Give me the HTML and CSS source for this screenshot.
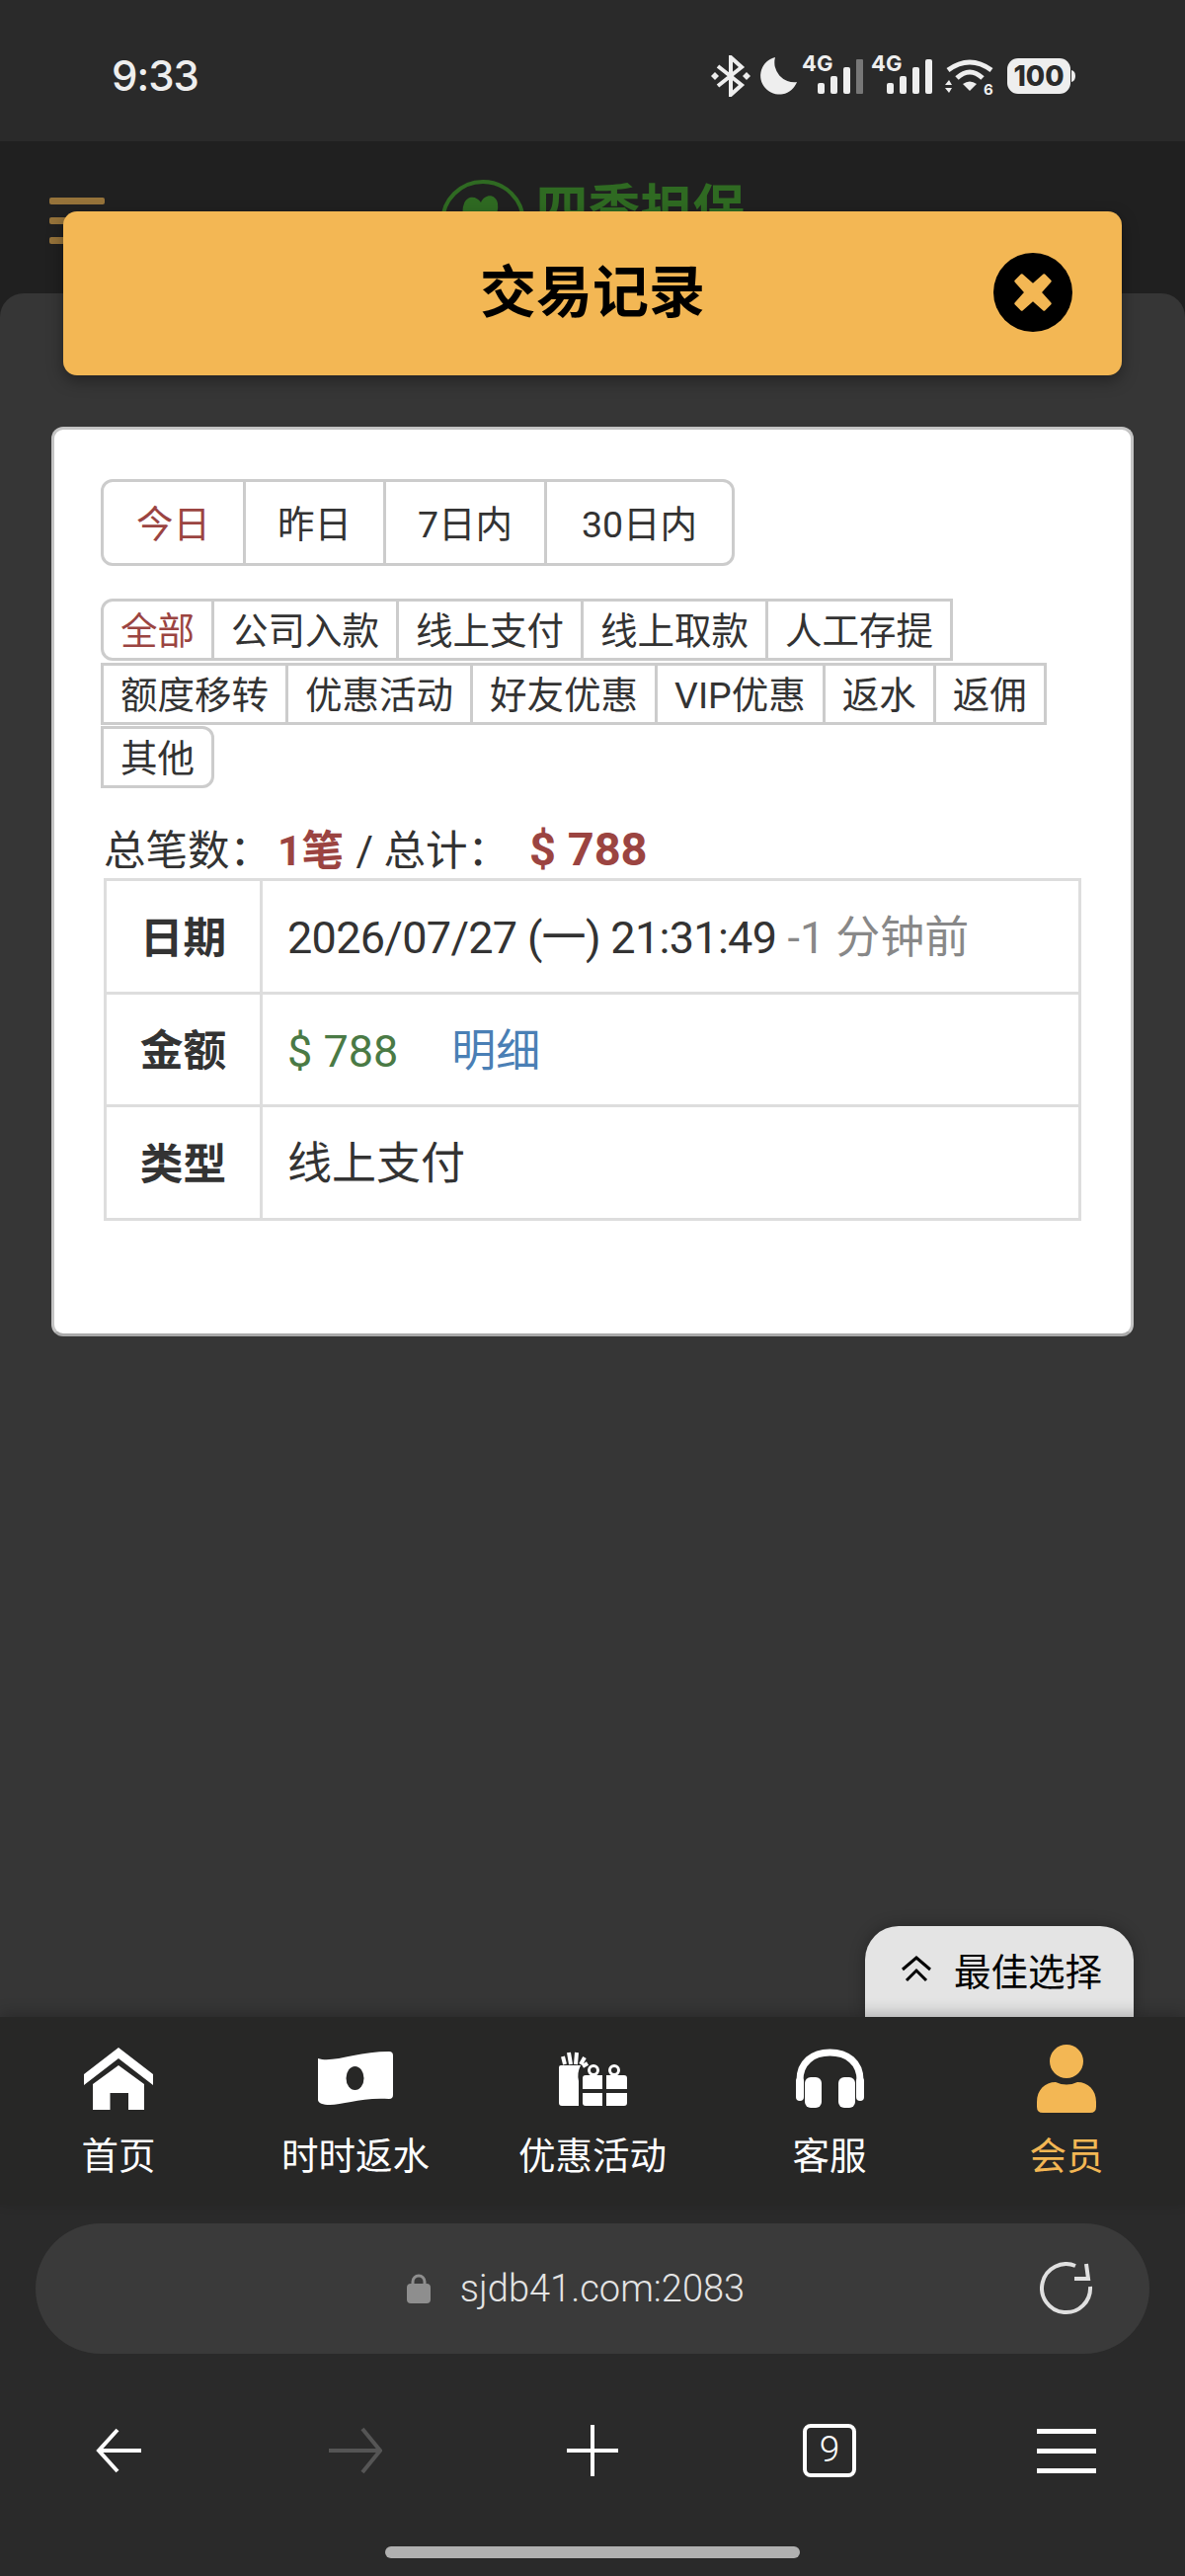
FILE: index.html
```html
<!DOCTYPE html>
<html lang="zh-CN">
<head>
  <meta charset="UTF-8" />
  <meta name="viewport" content="width=device-width, initial-scale=1.0"/>
  <title>交易记录</title>
  <link rel="stylesheet" href="styles.css">
</head>
<body>

  <!-- Phone status bar -->
  <div class="status-bar">
    <span class="clock">9:33</span>
    <div class="status-icons">
      <svg width="40" height="42" viewBox="0 0 40 42">
        <path d="M7 11 L31 30 L20 40 V2 L31 12 L7 31" fill="none" stroke="#eee" stroke-width="4"/>
        <path d="M4 17 L8 21 L4 25 L0 21Z M36 17 L40 21 L36 25 L32 21Z" fill="#eee"/>
      </svg>
      <svg class="ic-moon" width="37" height="38" viewBox="0 0 37 38">
        <path d="M15 0 A19 19 0 1 0 37 25 A20 20 0 0 1 15 0Z" fill="#eee"/>
      </svg>
      <svg class="ic-signal first" width="63" height="50" viewBox="0 -10 63 50">
        <text x="0" y="16" class="sig-text">4G</text>
        <rect x="16" y="28" width="7" height="11" rx="2" fill="#eee"/>
        <rect x="29" y="21" width="7" height="18" rx="2" fill="#eee"/>
        <rect x="42" y="12" width="7" height="27" rx="2" fill="#eee"/>
        <rect x="55" y="4" width="7" height="35" rx="1" fill="#777"/>
      </svg>
      <svg class="ic-signal second" width="63" height="50" viewBox="0 -10 63 50">
        <text x="0" y="16" class="sig-text">4G</text>
        <rect x="16" y="28" width="7" height="11" rx="2" fill="#eee"/>
        <rect x="29" y="21" width="7" height="18" rx="2" fill="#eee"/>
        <rect x="42" y="12" width="7" height="27" rx="2" fill="#eee"/>
        <rect x="55" y="4" width="7" height="35" rx="2" fill="#eee"/>
      </svg>
      <svg class="ic-wifi" width="50" height="46" viewBox="0 0 50 46">
        <path d="M3 12 Q25 -4 47 12" fill="none" stroke="#eee" stroke-width="5"/>
        <path d="M12 20 Q25 8 38 20" fill="none" stroke="#eee" stroke-width="5"/>
        <path d="M18 26 Q25 21 32 26 L25 33Z" fill="#eee"/>
        <path d="M4 22 L7 27 H0Z M0 30 H7 L4 35Z" fill="#eee"/>
        <text x="39" y="37" class="wifi-six">6</text>
      </svg>
      <svg class="ic-battery" width="69" height="36" viewBox="0 0 69 36">
        <rect x="0" y="0" width="64" height="36" rx="11" fill="#eee"/>
        <path d="M65 12 Q69 13 69 18 Q69 23 65 24Z" fill="#eee"/>
        <text x="32" y="28" text-anchor="middle" class="batt-text">100</text>
      </svg>
    </div>
  </div>

  <!-- Site header, mostly behind the modal -->
  <div class="site-header">
    <div class="burger"><i></i><i></i><i></i></div>
    <div class="logo">
      <svg width="86" height="86" viewBox="0 0 86 86">
        <circle cx="43" cy="43" r="41" fill="none" stroke="#2f6a22" stroke-width="4"/>
        <path d="M40 58 C24 44 20 34 24 24 C28 15 37 17 41 23 C45 14 56 14 58 24 C60 36 50 48 40 58Z" fill="#2f6a22"/>
      </svg>
      <span class="logo-text">四季担保</span>
    </div>
  </div>

  <div class="overlay">
    <div class="modal-head">
      <h1>交易记录</h1>
      <button class="close-btn" type="button">
        <svg width="50" height="50" viewBox="0 0 40 40">
          <path d="M6 11 L11 6 L20 14 L29 6 L34 11 L26 20 L34 29 L29 34 L20 26 L11 34 L6 29 L14 20Z" fill="#f3b754" stroke="#f3b754" stroke-width="2" stroke-linejoin="round"/>
        </svg>
      </button>
    </div>

    <div class="card">
      <div class="date-tabs">
        <a class="date-tab active">今日</a>
        <a class="date-tab">昨日</a>
        <a class="date-tab">7日内</a>
        <a class="date-tab">30日内</a>
      </div>

      <div class="types">
        <a class="type active">全部</a>
        <a class="type">公司入款</a>
        <a class="type">线上支付</a>
        <a class="type">线上取款</a>
        <a class="type">人工存提</a>
        <a class="type">额度移转</a>
        <a class="type">优惠活动</a>
        <a class="type">好友优惠</a>
        <a class="type">VIP优惠</a>
        <a class="type">返水</a>
        <a class="type">返佣</a>
        <a class="type">其他</a>
      </div>

      <div class="summary">总笔数：<b class="sum-count">1笔</b> / 总计：<b class="sum-total">$ 788</b></div>

      <table class="records">
        <tr>
          <th>日期</th>
          <td><span class="stamp">2026/07/27 (一) 21:31:49</span> <span class="ago">-1 分钟前</span></td>
        </tr>
        <tr>
          <th>金额</th>
          <td><span class="amount">$ 788</span><a class="detail">明细</a></td>
        </tr>
        <tr>
          <th>类型</th>
          <td>线上支付</td>
        </tr>
      </table>
    </div>

    <div class="best-pick">
      <svg width="32" height="27" viewBox="0 0 32 27">
        <path d="M2 14 L16 2 L30 14 M6 25 L16 15 L26 25" fill="none" stroke="#000" stroke-width="3"/>
      </svg>
      <span>最佳选择</span>
    </div>
  </div>

  <!-- Site bottom nav -->
  <nav class="bottom-nav">
    <a class="nav-item">
      <span class="nav-icon">
        <svg width="70" height="63" viewBox="0 0 70 63">
          <path d="M35 0 L70 27 V38 L35 11 L0 38 V27Z" fill="#fff"/>
          <path d="M35 18 L61 37 V63 H45 V46 H26.5 V63 H9 V37Z" fill="#fff"/>
        </svg>
      </span>
      首页
    </a>
    <a class="nav-item">
      <span class="nav-icon">
        <svg width="76" height="54" viewBox="0 0 76 54">
          <path d="M0 7 C15 12 40 0 72 0 Q76 0 76 4 V44 Q76 48 72 48 C45 46 25 54 12 54 C5 54 0 52 0 49Z" fill="#fff"/>
          <ellipse cx="37.5" cy="27" rx="9" ry="12" fill="#272726"/>
        </svg>
      </span>
      时时返水
    </a>
    <a class="nav-item">
      <span class="nav-icon">
        <svg width="69" height="55" viewBox="0 0 69 55">
          <path d="M2 14 H22 Q18 22 20 30 V55 H3 Q0 55 0 52 V16 Q0 14 2 14Z" fill="#fff"/>
          <path d="M6 13 L4 5 M12 13 L10 1 M17 13 L18 1 M22 13 L26 6 M24 15 L29 12" stroke="#fff" stroke-width="4" fill="none"/>
          <circle cx="35" cy="19" r="4.5" fill="none" stroke="#fff" stroke-width="3"/>
          <circle cx="56" cy="19" r="4.5" fill="none" stroke="#fff" stroke-width="3"/>
          <path d="M24 27 Q24 24 27 24 H44 V38 H24Z M48 24 H66 Q69 24 69 27 V38 H48Z" fill="#fff"/>
          <path d="M24 42 H44 V55 H27 Q24 55 24 52Z M48 42 H69 V52 Q69 55 66 55 H48Z" fill="#fff"/>
        </svg>
      </span>
      优惠活动
    </a>
    <a class="nav-item">
      <span class="nav-icon">
        <svg width="69" height="60" viewBox="0 0 69 60">
          <path d="M4 44 V32 C4 14 17 4 34.5 4 C52 4 65 14 65 32 V44" fill="none" stroke="#fff" stroke-width="7"/>
          <rect x="0" y="29" width="8" height="24" rx="4" fill="#fff"/>
          <rect x="61" y="29" width="8" height="24" rx="4" fill="#fff"/>
          <rect x="9" y="29" width="17" height="31" rx="6" fill="#fff"/>
          <rect x="43" y="29" width="17" height="31" rx="6" fill="#fff"/>
        </svg>
      </span>
      客服
    </a>
    <a class="nav-item current">
      <span class="nav-icon">
        <svg width="60" height="69" viewBox="0 0 60 69">
          <ellipse cx="30" cy="17" rx="17" ry="17" fill="#f3b754"/>
          <path d="M0 58 C0 46 8 38 19 38 Q30 43 41 38 C52 38 60 46 60 58 V63 Q60 69 54 69 H6 Q0 69 0 63Z" fill="#f3b754"/>
        </svg>
      </span>
      会员
    </a>
  </nav>

  <!-- Browser chrome -->
  <div class="browser">
    <div class="url-bar">
      <svg class="lock" width="24" height="30" viewBox="0 0 24 30">
        <path d="M6 12 V8 A6 6 0 0 1 18 8 V12" fill="none" stroke="#8e8e8e" stroke-width="3"/>
        <rect x="0" y="10" width="24" height="20" rx="4" fill="#8e8e8e"/>
      </svg>
      <span class="url">sjdb41.com:2083</span>
      <svg class="reload" width="54" height="54" viewBox="0 0 54 54">
        <path d="M51 25 A24.5 24.5 0 1 1 36 4" fill="none" stroke="#e0e0e0" stroke-width="4"/>
        <path d="M47 2 L49 17 H35" fill="none" stroke="#e0e0e0" stroke-width="4"/>
      </svg>
    </div>
    <div class="toolbar">
      <svg width="46" height="46" viewBox="0 0 46 46">
        <path d="M22 2 L3 23 L22 44 M3 23 H46" fill="none" stroke="#fff" stroke-width="4"/>
      </svg>
      <svg width="54" height="48" viewBox="0 0 54 48">
        <path d="M34 2 L52 24 L34 46 M0 24 H52" fill="none" stroke="#555" stroke-width="4"/>
      </svg>
      <svg width="52" height="52" viewBox="0 0 52 52">
        <path d="M26 0 V52 M0 26 H52" fill="none" stroke="#fff" stroke-width="4"/>
      </svg>
      <div class="tab-count">9</div>
      <div class="menu"><i></i><i></i><i></i></div>
    </div>
    <div class="home-bar"></div>
  </div>
</body>
</html>
```
FILE: styles.css
```css
* {
  box-sizing: border-box;
}

body {
  margin: 0;
  width: 1200px;
  height: 2608px;
  display: flex;
  flex-direction: column;
  overflow: hidden;
  background-color: #202020;
  color: #333;
  font-family: Roboto, 'Noto Sans CJK SC', sans-serif;
}

/* status bar */
.status-bar {
  height: 143px;
  flex: none;
  background-color: #2a2a2a;
  padding: 56px 111px 0 113px;
  display: flex;
  justify-content: space-between;
  align-items: flex-start;
}

.clock {
  font-family: Inter, sans-serif;
  font-size: 42px;
  font-weight: 500;
  letter-spacing: -1px;
  line-height: 42px;
  color: #eee;
}

.status-icons {
  display: flex;
  align-items: flex-start;
}

.ic-moon { margin: 2px 0 0 10px; }
.ic-signal { margin-top: -10px; }
.ic-signal.first { margin-left: 5px; }
.ic-signal.second { margin-left: 7px; }
.ic-wifi { margin: 3px 0 0 12px; }
.ic-battery { margin: 3px 0 0 13px; }

.sig-text {
  font-family: Inter, sans-serif;
  font-size: 22px;
  font-weight: 700;
  fill: #eee;
}

.wifi-six {
  font-family: Inter, sans-serif;
  font-size: 15px;
  font-weight: 700;
  fill: #eee;
}

.batt-text {
  font-family: Inter, sans-serif;
  font-size: 28px;
  font-weight: 800;
  fill: #2a2a2a;
}

/* site header */
.site-header {
  height: 154px;
  flex: none;
  background-color: #202020;
  display: grid;
  grid-template-columns: 1fr auto 1fr;
  align-items: start;
  padding-left: 50px;
}

.burger {
  margin-top: 57px;
  width: 56px;
  display: flex;
  flex-direction: column;
  gap: 13px;
}

.burger i {
  display: block;
  height: 7px;
  border-radius: 2px;
  background-color: #96733a;
}

.logo {
  margin-top: 39px;
  display: flex;
  gap: 11px;
  margin-left: -50px;
}

.logo-text {
  font-size: 53px;
  font-weight: 700;
  line-height: 62px;
  color: #2f6a22;
}

/* dim page */
.overlay {
  flex: 1;
  position: relative;
  display: flex;
  flex-direction: column;
  background-color: #363636;
  border-radius: 24px 24px 0 0;
  padding: 135px 52px 0;
}

.modal-head {
  position: absolute;
  left: 64px;
  top: -83px;
  width: 1072px;
  height: 166px;
  background-color: #f3b754;
  border-radius: 14px;
  box-shadow: 0 6px 16px rgba(0, 0, 0, 0.35);
  display: flex;
  align-items: center;
  justify-content: center;
}

.modal-head h1 {
  margin: 0 0 12px;
  font-size: 57px;
  font-weight: 700;
  color: #000;
}

.close-btn {
  position: absolute;
  right: 50px;
  top: 42px;
  width: 80px;
  height: 80px;
  padding: 0;
  border: none;
  border-radius: 50%;
  background-color: #000;
  display: flex;
  align-items: center;
  justify-content: center;
}

/* white card */
.card {
  height: 921px;
  flex: none;
  background-color: #fff;
  border: 3px solid #c4c4c4;
  border-bottom-color: #aaa;
  border-radius: 12px;
  padding: 50px 47px 0;
}

.date-tabs {
  width: 642px;
  height: 88px;
  display: grid;
  grid-template-columns: 144px 142px 163px 187px;
  border: 3px solid #ccc;
  border-radius: 12px;
  font-size: 37.5px;
}

.date-tab {
  display: flex;
  align-items: center;
  justify-content: center;
  padding-bottom: 4px;
  border-right: 3px solid #ccc;
  color: #333;
}

.date-tab:last-child {
  border-right: none;
}

.date-tab.active,
.type.active {
  color: #9b4441;
}

.types {
  margin-top: 33px;
  display: flex;
  flex-wrap: wrap;
  row-gap: 1.5px;
  padding-right: 3px;
  font-size: 37.5px;
}

.type {
  height: 63px;
  line-height: 61px;
  padding: 0 17px;
  margin-right: -3px;
  border: 3px solid #ccc;
  color: #333;
}

.type:first-child {
  border-radius: 12px 0 0 12px;
}

.type:last-child {
  border-radius: 0 12px 12px 0;
}

.summary {
  margin-top: 34px;
  padding-left: 3px;
  height: 53px;
  font-size: 42.5px;
  line-height: 55px;
  color: #333;
  white-space: nowrap;
}

.summary b {
  color: #9b4441;
}

.sum-count {
  margin: 0 2px 0 6px;
}

.sum-total {
  margin-left: 20px;
  font-size: 47px;
}

.records {
  margin: 4px 0 0 3px;
  width: 990px;
  border-collapse: collapse;
  border: 3px solid #ddd;
  font-size: 45px;
}

.records th,
.records td {
  height: 114.5px;
  border: 3px solid #ddd;
  padding: 0 0 4px;
}

.records th {
  width: 158px;
  font-size: 43.75px;
  color: #333;
}

.records td {
  padding-left: 25px;
  font-weight: 400;
  color: #333;
}

.stamp {
  letter-spacing: -0.7px;
}

.ago {
  color: #888;
}

.amount {
  color: #4a7a45;
}

.detail {
  margin-left: 54px;
  color: #4a7fb5;
}

/* floating button */
.best-pick {
  margin-top: auto;
  align-self: flex-end;
  width: 272px;
  height: 92px;
  background-color: #e4e4e4;
  border-radius: 34px 34px 0 0;
  box-shadow: 0 0 16px rgba(0, 0, 0, 0.3);
  display: flex;
  align-items: center;
  gap: 22px;
  padding: 0 0 6px 36px;
  font-size: 37.5px;
  color: #000;
}

/* bottom nav */
.bottom-nav {
  position: relative;
  height: 190px;
  flex: none;
  background-color: #272726;
  box-shadow: 0 -4px 14px rgba(0, 0, 0, 0.22);
  display: grid;
  grid-template-columns: repeat(5, 240px);
  padding-top: 27px;
  font-size: 37.5px;
  color: #fff;
}

.nav-item {
  display: flex;
  flex-direction: column;
  align-items: center;
  line-height: 50px;
}

.nav-item.current {
  color: #f3b754;
}

.nav-icon {
  height: 70px;
  margin-bottom: 19px;
  display: flex;
  align-items: center;
  justify-content: center;
}

/* browser */
.browser {
  height: 376px;
  flex: none;
  background-color: #2a2a2a;
  padding-top: 19px;
}

.url-bar {
  position: relative;
  height: 132px;
  margin: 0 36px;
  padding-right: 34px;
  border-radius: 66px;
  background-color: #3a3a3a;
  display: flex;
  align-items: center;
  justify-content: center;
  gap: 30px;
}

.url {
  font-size: 38px;
  font-weight: 300;
  color: #e4e4e4;
}

.reload {
  position: absolute;
  right: 57px;
  top: 39px;
}

.toolbar {
  height: 120px;
  margin-top: 38px;
  display: grid;
  grid-template-columns: repeat(5, 240px);
  align-items: center;
  justify-items: center;
}

.tab-count {
  width: 54px;
  height: 54px;
  border: 4px solid #fff;
  border-radius: 8px;
  font-size: 37px;
  font-weight: 300;
  line-height: 44px;
  text-align: center;
  color: #fff;
}

.menu {
  width: 60px;
  display: flex;
  flex-direction: column;
  gap: 15px;
}

.menu i {
  display: block;
  height: 5px;
  background-color: #fff;
}

.home-bar {
  width: 420px;
  height: 12px;
  margin: 37px auto 0;
  border-radius: 6px;
  background-color: #b0b0b0;
}
```
